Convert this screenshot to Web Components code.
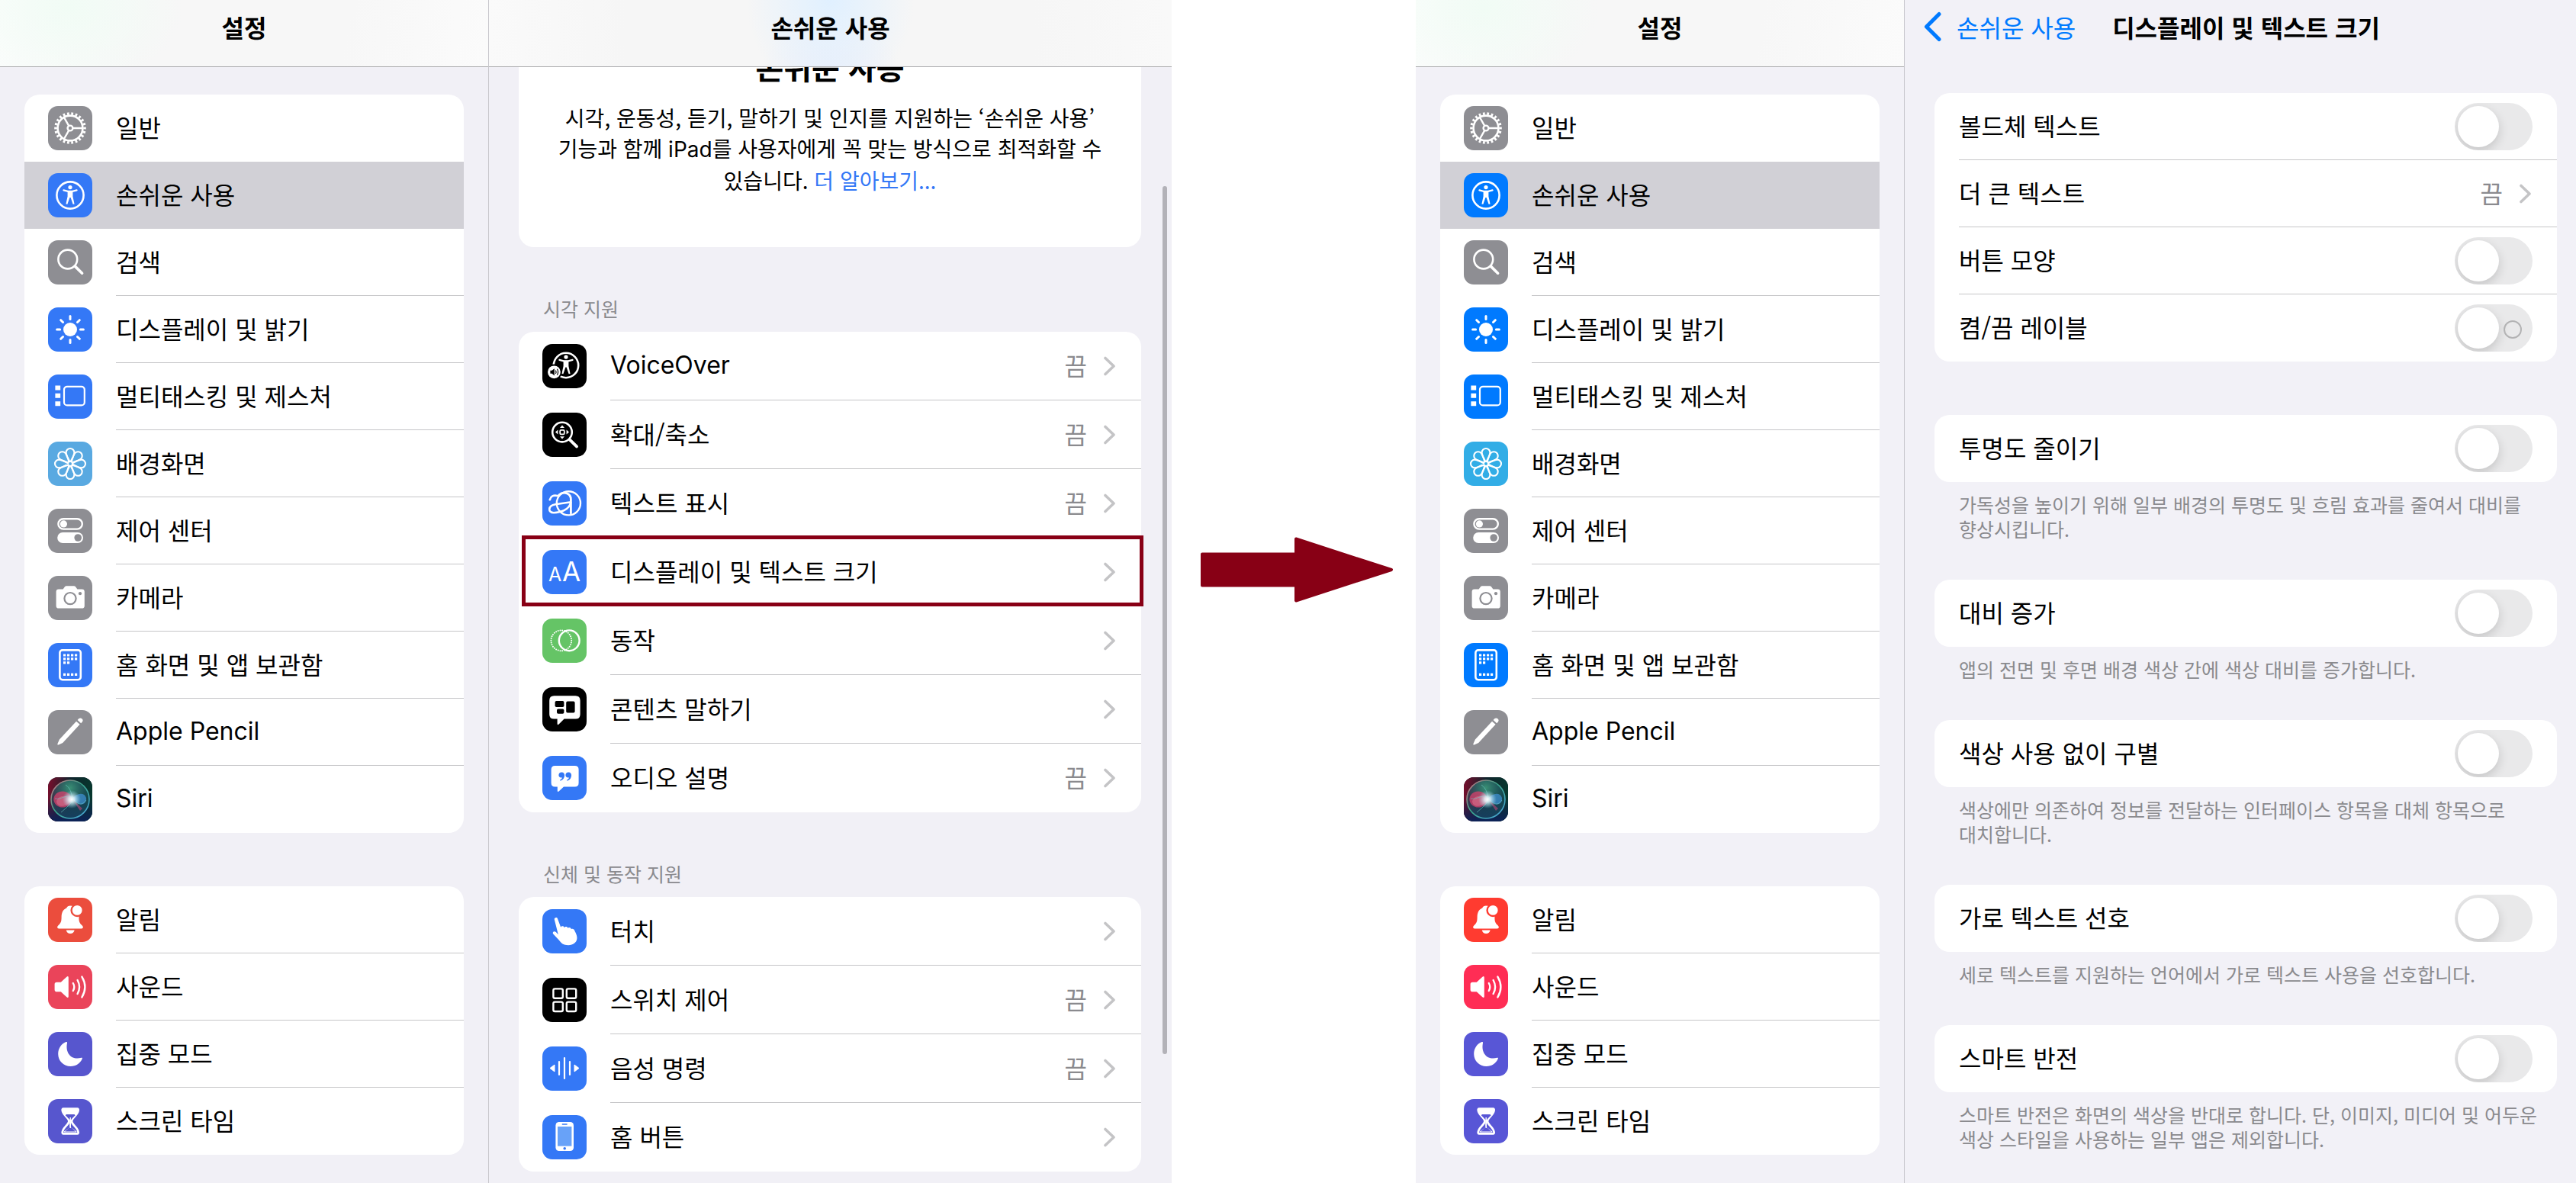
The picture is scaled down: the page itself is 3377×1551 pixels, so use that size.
<!DOCTYPE html>
<html lang="ko">
<head>
<meta charset="utf-8">
<meta name="viewport" content="width=device-width, initial-scale=1">
<title>디스플레이 및 텍스트 크기</title>
<style>
  * { box-sizing: border-box; }
  body {
    margin: 0;
    height: 100vh;
    overflow: hidden;
    background: #fff;
    color: #000;
    font: 400 32px/40px "Noto Sans CJK KR", sans-serif;
    word-break: keep-all;
  }
  main { display: flex; height: 100%; }
  device-screen { flex: 1536 1 0; }
  device-screen.after { flex-grow: 1521; }
  flow-arrow { flex: 320 1 0; }
  device-screen.before {
    --bg: #f1f0f6; --blue: #3478f6; --sky: #59a9e1; --red: #eb4d3d;
    --pink: #ea445a; --indigo: #5756ce; --green: #65c466;
  }
  device-screen.after {
    --bg: #f2f1f7; --blue: #007aff; --sky: #32ade6; --red: #ff3b30;
    --pink: #ff2d55; --indigo: #5856d6; --green: #34c759;
  }
  :lang(en) { font-family: Inter, sans-serif; }
</style>
</head>
<body>
<main>
  <device-screen class="before">
    <settings-sidebar slot="sidebar"></settings-sidebar>
    <detail-pane tinted>
      <span slot="title">손쉬운 사용</span>
      <hero-card>
        <span slot="heading">손쉬운 사용</span>
        시각, 운동성, 듣기, 말하기 및 인지를 지원하는 ‘손쉬운 사용’ 기능과 함께 <span lang="en">iPad</span>를 사용자에게 꼭 맞는 방식으로 최적화할 수 있습니다.
        <text-link>더 알아보기...</text-link>
      </hero-card>
      <settings-group tall caption="시각 지원">
        <settings-row icon="voiceover" value="끔"><span lang="en">VoiceOver</span></settings-row>
        <settings-row icon="zoom" value="끔">확대/축소</settings-row>
        <settings-row icon="hover" value="끔">텍스트 표시</settings-row>
        <settings-row icon="textsize" link marked>디스플레이 및 텍스트 크기</settings-row>
        <settings-row icon="motion" link>동작</settings-row>
        <settings-row icon="spoken" link>콘텐츠 말하기</settings-row>
        <settings-row icon="quote" value="끔">오디오 설명</settings-row>
      </settings-group>
      <settings-group tall caption="신체 및 동작 지원">
        <settings-row icon="touch" link>터치</settings-row>
        <settings-row icon="switches" value="끔">스위치 제어</settings-row>
        <settings-row icon="voice" value="끔">음성 명령</settings-row>
        <settings-row icon="homebutton" link>홈 버튼</settings-row>
      </settings-group>
    </detail-pane>
  </device-screen>

  <flow-arrow></flow-arrow>

  <device-screen class="after">
    <settings-sidebar slot="sidebar"></settings-sidebar>
    <detail-pane back="손쉬운 사용">
      <span slot="title">디스플레이 및 텍스트 크기</span>
      <settings-group>
        <toggle-row>볼드체 텍스트</toggle-row>
        <settings-row value="끔">더 큰 텍스트</settings-row>
        <toggle-row>버튼 모양</toggle-row>
        <toggle-row labelled>켬/끔 레이블</toggle-row>
      </settings-group>
      <settings-group note="가독성을 높이기 위해 일부 배경의 투명도 및 흐림 효과를 줄여서 대비를 향상시킵니다.">
        <toggle-row>투명도 줄이기</toggle-row>
      </settings-group>
      <settings-group note="앱의 전면 및 후면 배경 색상 간에 색상 대비를 증가합니다.">
        <toggle-row>대비 증가</toggle-row>
      </settings-group>
      <settings-group note="색상에만 의존하여 정보를 전달하는 인터페이스 항목을 대체 항목으로 대치합니다.">
        <toggle-row>색상 사용 없이 구별</toggle-row>
      </settings-group>
      <settings-group note="세로 텍스트를 지원하는 언어에서 가로 텍스트 사용을 선호합니다.">
        <toggle-row>가로 텍스트 선호</toggle-row>
      </settings-group>
      <settings-group note="스마트 반전은 화면의 색상을 반대로 합니다. 단, 이미지, 미디어 및 어두운 색상 스타일을 사용하는 일부 앱은 제외합니다.">
        <toggle-row>스마트 반전</toggle-row>
      </settings-group>
    </detail-pane>
  </device-screen>
</main>

<script>
const GRAY = '#8e8e93';
const range = n => Array.from({ length: n }, (_, i) => i);
const person = `
  <circle cx="29" cy="18.6" r="2.6" fill="#fff" stroke="none"/>
  <path d="M20.4 22.4 26 23.8h6l5.6-1.4" stroke-width="2.2" stroke-linecap="round"/>
  <path fill="#fff" stroke="none" d="M25.6 23.2h6.8v7.4l2.2 9.8-2 .4-3-8.8h-1.2l-3 8.8-2-.4 2.2-9.8z"/>`;

/* Each glyph is drawn on a 58-unit tile: [tile colour, strokes]. */
const ICONS = {
  gear: [GRAY, `
    <circle cx="29" cy="29" r="16.4" stroke-width="2.6"/>
    <circle cx="29" cy="29" r="19" stroke-width="3.6" pathLength="44" stroke-dasharray="1 1" stroke-dashoffset=".5"/>
    <circle cx="29" cy="29" r="3.4" stroke-width="2.4"/>
    <path stroke-width="2.4" d="M32.6 29H45M27.2 25.8 21 15M27.2 32.2 21 43"/>`],
  access: ['var(--blue)', `<circle cx="29" cy="29" r="17.6" stroke-width="2.6"/>${person}`],
  search: [GRAY, `<circle cx="25.8" cy="25" r="12.4" stroke-width="2.6"/><path stroke-width="3.6" stroke-linecap="round" d="m35.6 34.4 9 8.8"/>`],
  sun: ['var(--blue)', `<circle cx="29" cy="29" r="9" fill="#fff" stroke="none"/>
    ${range(8).map(i => `<path stroke-width="3" stroke-linecap="round" d="M29 11.6v4" transform="rotate(${i * 45} 29 29)"/>`).join('')}`],
  multitask: ['var(--blue)', `<path fill="#fff" stroke="none" d="M9.4 14.4h6.8v6H9.4zM9.4 24.8h6.8v6H9.4zM9.4 35.2h6.8v6H9.4z"/>
    <rect x="21" y="15.8" width="26.8" height="24.6" rx="4" stroke-width="2.2"/>`],
  flower: ['var(--sky)', range(8).map(i => `<path stroke-width="2.1" d="M29 28C27.4 22.6 23.6 19.4 23.6 14.4a5.4 5.4 0 0 1 10.8 0C34.4 19.4 30.6 22.6 29 28" transform="rotate(${i * 45} 29 29)"/>`).join('') + `<circle cx="29" cy="29" r="2" fill="var(--sky)" stroke="none"/>`],
  control: [GRAY, `<rect x="13.4" y="13.2" width="31.4" height="13.4" rx="6.7" stroke-width="2.4"/>
    <circle cx="20.4" cy="19.9" r="4.6" fill="#fff" stroke="none"/>
    <rect x="12.2" y="31" width="33.8" height="14" rx="7" fill="#fff" stroke="none"/>
    <circle cx="39.2" cy="38" r="4.8" fill="${GRAY}" stroke="none"/>`],
  camera: [GRAY, `<path fill="#fff" stroke="none" d="M14 17.4h5.6l2.2-2.9q.9-1.2 2.4-1.2h9.6q1.5 0 2.4 1.2l2.2 2.9H44.4q3.4 0 3.4 3.4v18.4q0 3.4-3.4 3.4H14q-3.4 0-3.4-3.4V20.8q0-3.4 3.4-3.4z"/>
    <circle cx="29" cy="29.6" r="7.6" stroke="${GRAY}" stroke-width="2.2"/><circle cx="42" cy="23.2" r="2.1" fill="${GRAY}" stroke="none"/>`],
  home: ['var(--blue)', `<rect x="15.4" y="9.4" width="27.4" height="38.8" rx="3.4" stroke-width="2.6"/>
    <path stroke-width="3.2" stroke-dasharray="3.2 1.8" d="M20 16h19M20 20.9h19M20 25.8h9M20 41.4h19"/>`],
  pencil: [GRAY, `<path fill="#fff" stroke="none" d="M12.4 45.2q-.2-.2.2-1.4l2.3-5.2L37 14.7l4.6 4L19.2 43l-5 2.2q-1.4.5-1.8 0zM38.6 13l1.6-1.7q2.2-1.8 4.2 0 2.2 2 .4 4.2l-1.6 1.7z"/>`],
  siri: ['#0b1226', `
    <defs>
      <linearGradient id="a" x1="0" y1="0" x2="1" y2=".1"><stop stop-color="#7c0d2c"/><stop offset=".5" stop-color="#10232c"/><stop offset="1" stop-color="#07372e"/></linearGradient>
      <linearGradient id="b" x1="0" y1="0" x2="0" y2="1"><stop offset=".45" stop-color="#10204c" stop-opacity="0"/><stop offset="1" stop-color="#0c2258"/></linearGradient>
      <linearGradient id="c" x1="0" y1="0" x2="1" y2="1"><stop stop-color="#d66f83"/><stop offset=".45" stop-color="#39a488"/><stop offset="1" stop-color="#4aa5e0"/></linearGradient>
      <radialGradient id="d"><stop stop-color="#fff"/><stop offset=".3" stop-color="#e8faff" stop-opacity=".85"/><stop offset="1" stop-color="#9fdcf0" stop-opacity="0"/></radialGradient>
      <radialGradient id="e" cx=".5" cy=".2"><stop stop-color="#3a8f74"/><stop offset="1" stop-color="#1f5a6c" stop-opacity=".5"/></radialGradient>
      <clipPath id="t"><rect width="58" height="58" rx="13"/></clipPath>
    </defs>
    <g clip-path="url(#t)" stroke="none">
      <rect width="58" height="58" fill="url(#a)"/><rect width="58" height="58" fill="url(#b)"/>
      <circle cx="29" cy="29" r="25" fill="url(#e)" stroke="url(#c)" stroke-width="1.6"/>
      <ellipse cx="19" cy="29" rx="11.6" ry="10.6" fill="#d8406c" fill-opacity=".75"/>
      <path fill="#f08aa0" fill-opacity=".4" d="M32 29C24 22 12 24 11 32c2 10 15 6 21-3z"/>
      <path fill="#3f8fd0" fill-opacity=".75" d="M32 28c6-8 16-8 18-1 1 9-8 13-18 1z"/>
      <path fill="#a04470" fill-opacity=".7" d="m32 29 13 12-3 3z"/>
      <path stroke="#6ec8c4" stroke-opacity=".6" d="M9 28c10 2 16-8 23 0s12 10 18 2M23 10c6 4 8 11 9 18 0 6-8 12-15 18"/>
      <circle cx="31" cy="29" r="12" fill="url(#d)"/>
    </g>`],
  bell: ['var(--red)', `<path fill="#fff" stroke="none" d="M29 10.4c-2.4 0-4 1.2-4.8 3-5 2.2-6.6 6.6-6.6 12.2 0 6-1 7.6-3.4 10-1.6 1.6-2 2.2-2 3.2 0 1 .8 1.6 2 1.6h29.6c1.2 0 2-.6 2-1.6 0-1-.4-1.6-2-3.2-2.4-2.4-3.4-4-3.4-10V18L32 10.8z"/>
    <path fill="#fff" stroke="none" d="M23.8 42.4h10.8c-.4 2.6-2.4 4.6-5.4 4.6s-5-2-5.4-4.6z"/>
    <circle cx="38.2" cy="16.4" r="7.6" fill="#fff" stroke="var(--red)" stroke-width="2.4"/>`],
  sound: ['var(--pink)', `<path fill="#fff" stroke="none" d="M11.4 22.8h5.4l7.6-7q2.4-1.8 2.4 1v24.4q0 2.8-2.4 1l-7.6-7h-5.4q-2.8 0-2.8-2.8v-6.8q0-2.8 2.8-2.8z"/>
    <path stroke-width="2.4" stroke-linecap="round" d="M32.8 24q3 5 0 10M38.6 20q5 9 0 18M44.4 15.6q8 13.4 0 26.8"/>`],
  moon: ['var(--indigo)', `<path fill="#fff" stroke="none" d="M23.6 13C18 15 13.2 21 13.2 28.8 13.2 38 20.4 45 29.6 45c7 0 12.8-4 15.2-10 .4-1-.2-1.6-1.2-1.2-12 3.6-21.4-5.4-18.6-19.4.2-1.2-.4-1.8-1.4-1.4z"/>`],
  hourglass: ['var(--indigo)', `<path stroke-width="2.8" stroke-linejoin="round" d="M20 12.6h18.4q1.4 0 1.2 2C39 21 31 24.4 31 29s8 8 8.6 14.4q.2 2-1.2 2H20q-1.4 0-1.2-2C19.4 37 27.4 33.6 27.4 29s-8-8-8.6-14.4q-.2-2 1.2-2z"/>
    <path fill="#fff" stroke="none" d="M19.4 13h19.6l-1 7H20.4zM28.4 24h1.6v13l7.4 5.6q.4 1-.6 1H21.6q-1 0-.6-1l7.4-5.6z"/><path fill="var(--indigo)" stroke="none" d="M22.6 21h13.2L30 27h-1.6zM22.2 42.4 29 36l7.2 6.4z"/><path stroke-width="1.4" d="M29.2 24v14"/>`],
  voiceover: ['#000', `<circle cx="31" cy="28" r="16.2" stroke-width="2.6"/><g transform="translate(2 -1.5)">${person}</g>
    <circle cx="15.4" cy="36.8" r="10.2" fill="#000" stroke="none"/><circle cx="15.4" cy="36.8" r="8.4" fill="#fff" stroke="none"/>
    <path fill="#000" stroke="none" d="M10.4 34.8h2.2l3.2-2.6v9.2l-3.2-2.6h-2.2z"/><path stroke="#000" stroke-width="1.1" d="M17.4 34.6q1.4 2.2 0 4.4M19.4 32.8q2.4 4 0 8"/>`],
  zoom: ['#000', `<circle cx="26" cy="25.6" r="12.8" stroke-width="2.6"/><path stroke-width="4" stroke-linecap="round" d="m36 35.6 9 8.8"/>
    <rect x="23.2" y="22.8" width="5.6" height="5.6" rx="1.4" stroke-width="1.8"/>
    <path fill="#fff" stroke="none" d="m26 16.6 3 3.4h-6zM26 34.6l3-3.4h-6zM17 25.6l3.4-3v6zM35 25.6l-3.4-3v6z"/>`],
  hover: ['var(--blue)', `<circle cx="34.4" cy="28.8" r="15.6" stroke-width="2.4"/>
    <path stroke-width="2.8" stroke-linecap="round" d="M9.8 24.2c1-4.4 5-6.2 9.6-5.2M21.6 18c5.6-5.4 15.8-3 15.8 6V42"/>
    <path stroke-width="2.6" d="M37.4 27.2 17 30.2C7 31.8 7 41.2 15 41.2s20.4-3.4 22.4-14"/>`],
  textsize: ['var(--blue)', `<g fill="#fff" stroke="none" font-family="Inter, sans-serif"><text x="8" y="41" font-size="25">A</text><text x="26" y="41" font-size="35">A</text></g>`],
  motion: ['var(--green)', `<circle cx="35.2" cy="28.8" r="13.4" stroke-width="2.4"/>
    <circle cx="24.8" cy="28.8" r="13.4" stroke-width="2" pathLength="60" stroke-linecap="round" stroke-dasharray="0 2"/>`],
  spoken: ['#000', `<path fill="#fff" stroke="none" d="M15.4 11.2h28q6.200 0 6.200 6.200v18q0 6.200-6.200 6.200H28.600l-7 7q-2 1.400-2-.8v-6.200h-4.200q-6.200 0-6.200-6.200v-18q0-6.200 6.200-6.200z"/>
    <g fill="#000" stroke="none"><rect x="16.6" y="18" width="11.8" height="8" rx="1.8"/><rect x="31.2" y="18.6" width="11.4" height="15" rx="1.8"/><rect x="19" y="28.4" width="9.4" height="6.4" rx="1.8"/></g>`],
  quote: ['var(--blue)', `<path fill="#fff" stroke="none" d="M16.6 13h26q5 0 5 5v17.6q0 5-5 5H28l-6.4 6q-1.8 1.2-1.8-.8v-5.2h-3.2q-5 0-5-5V18q0-5 5-5z"/>
    <path fill="var(--blue)" stroke="none" d="M25.2 21.6c4 0 4.4 3.6 3.4 6.4-.8 2.4-2.6 4.2-4.8 4.6-1 0-1-1-.2-1.4 1.4-.8 2.2-1.8 2.4-2.8-3 .6-4.6-1-4.6-3.2 0-2 1.6-3.6 3.8-3.6zM34.2 21.6c4 0 4.4 3.6 3.4 6.4-.8 2.4-2.6 4.2-4.8 4.6-1 0-1-1-.2-1.4 1.4-.8 2.2-1.8 2.4-2.8-3 .6-4.6-1-4.6-3.2 0-2 1.6-3.6 3.8-3.6z"/>`],
  touch: ['var(--blue)', `<path fill="#fff" stroke="none" d="M15.8 13.6c-.6-2.8 3.4-3.6 4.2-1.2l4.2 11.4c.8-2 4-2 4.6.4 1-1.8 4.2-1.6 4.6.6 1.2-1.4 4-.8 4.6 1.4 1.6-1 3.8 0 4.4 2.2 2.4 4.4 3.4 7.6 3 10.4-.6 5-5 8.4-11.4 8.4-6 0-9.6-2.6-12-6.4L14.2 32.600c-1.600-2.800 1.600-4.600 3.600-2.600l3 3.200z"/>`],
  switches: ['#000', `<g stroke-width="2.4"><rect x="14.4" y="14.4" width="12.4" height="12.4" rx="2"/><rect x="31.8" y="14.4" width="12.4" height="12.4" rx="2"/><rect x="14.4" y="31.6" width="12.4" height="12.4" rx="2"/><rect x="31.8" y="31.6" width="12.4" height="12.4" rx="2"/></g>`],
  voice: ['var(--blue)', `<path stroke-width="2.2" stroke-linecap="round" d="M29 15v27M22 20v17M36 20v17"/>
    <path fill="#fff" stroke="#fff" stroke-width="1" stroke-linejoin="round" d="M10 28.5 16 24v9zM48 28.5 42 24v9z"/>`],
  homebutton: ['var(--blue)', `<rect x="17.4" y="9" width="23.6" height="38" rx="4.4" fill="#fff" stroke="none"/><rect x="20" y="15" width="18.4" height="25.6" fill="#68a2f8" stroke="none"/>
    <path stroke="var(--blue)" stroke-width="1.6" stroke-linecap="round" d="M26.4 12h5.6"/><circle cx="29.2" cy="43.8" r="1.8" fill="var(--blue)" stroke="none"/>`],
};

const RESET = '*{box-sizing:border-box}';

class Base extends HTMLElement {
  connectedCallback() {
    if (this.shadowRoot) return;
    this.attachShadow({ mode: 'open' }).innerHTML = `<style>${RESET}${this.css()}</style>${this.html()}`;
  }
  css() { return ':host{display:block}'; }
  html() { return '<slot></slot>'; }
}

customElements.define('device-screen', class extends Base {
  css() { return `
    :host { display: flex; min-width: 0; height: 100%; overflow: hidden; background: var(--bg); }
    ::slotted(settings-sidebar) { flex: 0 0 640px; }
    ::slotted(detail-pane) { flex: 1; min-width: 0; }`; }
  html() { return '<slot name="sidebar"></slot><slot></slot>'; }
});

customElements.define('flow-arrow', class extends Base {
  css() { return `
    :host { display: flex; align-items: center; justify-content: center; min-width: 0; }
    svg { width: 252px; height: 86px; margin: 0 0 58px 8px; display: block; }`; }
  html() { return `<svg viewBox="0 0 252 86" aria-hidden="true"><path fill="#880015" stroke="#880015" stroke-width="4" stroke-linejoin="round" d="M2 22.5H125V2.5L250 43 125 83.5v-20H2z"/></svg>`; }
});

customElements.define('app-icon', class extends Base {
  css() { return `
    :host { display: block; flex: none; width: 58px; height: 58px; }
    svg { display: block; width: 100%; height: 100%; }`; }
  html() {
    const [tile, art] = ICONS[this.getAttribute('name')];
    return `<svg viewBox="0 0 58 58" fill="none" stroke="#fff" aria-hidden="true"><rect width="58" height="58" rx="13" fill="${tile}" stroke="none"/>${art}</svg>`;
  }
});

const ROW_CSS = `
  :host { display: block; position: relative; }
  .row { display: flex; align-items: center; gap: 31px; height: var(--row, 88px); padding-left: 32px; color: inherit; text-decoration: none; }
  .body { flex: 1; min-width: 0; height: 100%; display: flex; align-items: center; padding-right: 32px; border-bottom: 1px solid var(--divider, #c6c6c8); }
  .text, .value { padding-bottom: 4px; }
  .text { flex: 1; min-width: 0; }`;

customElements.define('settings-row', class extends Base {
  css() { return `${ROW_CSS}
    :host([icon]) .row { padding-left: 31px; }
    :host([plain]), :host([selected]) { --divider: transparent; }
    :host([selected]) { background: #d1d0d6; }
    :host([marked])::after { content: ""; position: absolute; inset: -3px -3px 0 4px; border: 5px solid #880015; }
    .body { padding-right: 34px; }
    .value { color: #8a8a8e; margin-right: 21px; }
    svg { width: 16px; height: 26px; flex: none; }`; }
  html() {
    const icon = this.getAttribute('icon'), value = this.getAttribute('value');
    const chevron = value || this.hasAttribute('link');
    return `<a class="row" href="#"${this.hasAttribute('selected') ? ' aria-current="page"' : ''}>
      ${icon ? `<app-icon name="${icon}"></app-icon>` : ''}
      <span class="body"><span class="text"><slot></slot></span>
      ${value ? `<span class="value">${value}</span>` : ''}
      ${chevron ? '<svg viewBox="0 0 16 26" fill="none" stroke="#c4c4c6" stroke-width="3.6" stroke-linecap="round" stroke-linejoin="round" aria-hidden="true"><path d="m3 2.5 11 10.500-11 10.500"/></svg>' : ''}
      </span></a>`;
  }
});

customElements.define('toggle-row', class extends Base {
  css() { return `${ROW_CSS}
    input {
      appearance: none; flex: none; position: relative; width: 102px; height: 62px; margin: 0;
      border-radius: 31px; background: #e9e9ea; overflow: hidden;
    }
    input::before {
      content: ""; position: absolute; left: 4px; top: 4px; width: 54px; height: 54px;
      border-radius: 50%; background: #fff; box-shadow: 0 5px 14px rgba(0,0,0,.16);
    }
    :host([labelled]) input::after {
      content: ""; position: absolute; right: 14px; top: 21px; width: 20px; height: 20px;
      border-radius: 50%; border: 2px solid #b3b3b4;
    }
    input:checked { background: #34c759; }
    input:checked::before { left: 44px; }`; }
  html() { return `<div class="row"><span class="body"><label class="text" for="sw"><slot></slot></label><input id="sw" type="checkbox" role="switch"></span></div>`; }
});

customElements.define('settings-group', class extends Base {
  css() { return `
    :host { display: block; }
    :host([tall]) { --row: 90px; }
    .card { background: #fff; border-radius: 20px; }
    ::slotted(:last-child) { --divider: transparent; }
    h2, p { margin: 0; padding: 0 16px 0 32px; font-size: 25px; line-height: 32px; font-weight: 400; color: #8a8a8e; }
    h2 { padding-top: 64px; padding-bottom: 15px; }
    p { padding-top: 13px; padding-bottom: 51px; }`; }
  html() {
    const c = this.getAttribute('caption'), n = this.getAttribute('note');
    return `${c ? `<h2>${c}</h2>` : ''}<div class="card"><slot></slot></div>${n ? `<p>${n}</p>` : ''}`;
  }
});

customElements.define('text-link', class extends Base {
  css() { return ':host{display:inline} a{color:var(--blue);text-decoration:none}'; }
  html() { return '<a href="#"><slot></slot></a>'; }
});

customElements.define('hero-card', class extends Base {
  css() { return `
    :host { display: block; margin-top: -40px; padding: 14px 40px 68px; border-radius: 20px; background: #fff; text-align: center; font-size: 28px; line-height: 40px; }
    h2 { margin: 0 0 22px; font-size: 40px; line-height: 50px; font-weight: 700; }`; }
  html() { return '<h2><slot name="heading"></slot></h2><slot></slot>'; }
});

customElements.define('settings-sidebar', class extends Base {
  css() { return `
    :host { display: block; }
    header {
      height: 88px; padding-bottom: 18px; display: flex; align-items: center; justify-content: center;
      border-bottom: 1px solid #a9a9ab;
      background: radial-gradient(ellipse 150px 110px at 90px 10px, #f1fcf5, transparent), linear-gradient(100deg, #fbfdfc, #f7f7f7 30%, #f7f7f7 70%, #fbfbfb);
    }
    h1 { margin: 0; font-size: 32px; line-height: 40px; font-weight: 600; }
    nav { display: flex; flex-direction: column; gap: 70px; padding: 36px 32px; }
    :lang(en) { font-family: Inter, sans-serif; }`; }
  html() { return `
    <header><h1>설정</h1></header>
    <nav>
      <settings-group>
        <settings-row icon="gear" plain>일반</settings-row>
        <settings-row icon="access" selected>손쉬운 사용</settings-row>
        <settings-row icon="search">검색</settings-row>
        <settings-row icon="sun">디스플레이 및 밝기</settings-row>
        <settings-row icon="multitask">멀티태스킹 및 제스처</settings-row>
        <settings-row icon="flower">배경화면</settings-row>
        <settings-row icon="control">제어 센터</settings-row>
        <settings-row icon="camera">카메라</settings-row>
        <settings-row icon="home">홈 화면 및 앱 보관함</settings-row>
        <settings-row icon="pencil"><span lang="en">Apple Pencil</span></settings-row>
        <settings-row icon="siri"><span lang="en">Siri</span></settings-row>
      </settings-group>
      <settings-group>
        <settings-row icon="bell">알림</settings-row>
        <settings-row icon="sound">사운드</settings-row>
        <settings-row icon="moon">집중 모드</settings-row>
        <settings-row icon="hourglass">스크린 타임</settings-row>
      </settings-group>
    </nav>`; }
});

customElements.define('detail-pane', class extends Base {
  css() { return `
    :host { display: flex; flex-direction: column; position: relative; height: 100%; border-left: 1px solid #c8c7cc; }
    header { flex: none; height: 88px; padding: 0 24px 18px; display: flex; align-items: center; gap: 48px; }
    :host([tinted]) header {
      justify-content: center; border-bottom: 1px solid #a9a9ab;
      background: radial-gradient(ellipse 110px 130px at 50% 0, #e0f0ff, transparent), radial-gradient(ellipse 90px 60px at 50% 100%, #ebeffa, transparent), linear-gradient(90deg, #fafafa, #f6f6f6 20%, #f6f6f6 80%, #f9f9f9);
    }
    h1 { margin: 0; font-size: 32px; line-height: 40px; font-weight: 600; }
    a { display: flex; align-items: center; gap: 18px; color: var(--blue); text-decoration: none; }
    a svg { width: 26px; height: 40px; }
    .scroll { flex: 1; min-height: 0; overflow: hidden; padding: 34px 25px 0 39px; }
    :host([tinted]) .scroll { padding: 0 40px 0 39px; }
    ::slotted(settings-group:first-of-type) { margin-bottom: 70px; }
    :host([tinted]) ::slotted(settings-group) { margin-bottom: 0; }
    .bar { position: absolute; right: 6px; top: 244px; width: 6px; height: 1138px; border-radius: 3px; background: #b3b2b8; }`; }
  html() {
    const back = this.getAttribute('back');
    return `<header>${back ? `<a href="#"><svg viewBox="0 0 26 40" fill="none" stroke="currentColor" stroke-width="5" stroke-linecap="round" stroke-linejoin="round" aria-hidden="true"><path d="M21 3.5 4.5 20 21 36.5"/></svg><span>${back}</span></a>` : ''}<h1><slot name="title"></slot></h1></header>
      <div class="scroll"><slot></slot></div>${this.hasAttribute('tinted') ? '<div class="bar"></div>' : ''}`;
  }
});
</script>
</body>
</html>
